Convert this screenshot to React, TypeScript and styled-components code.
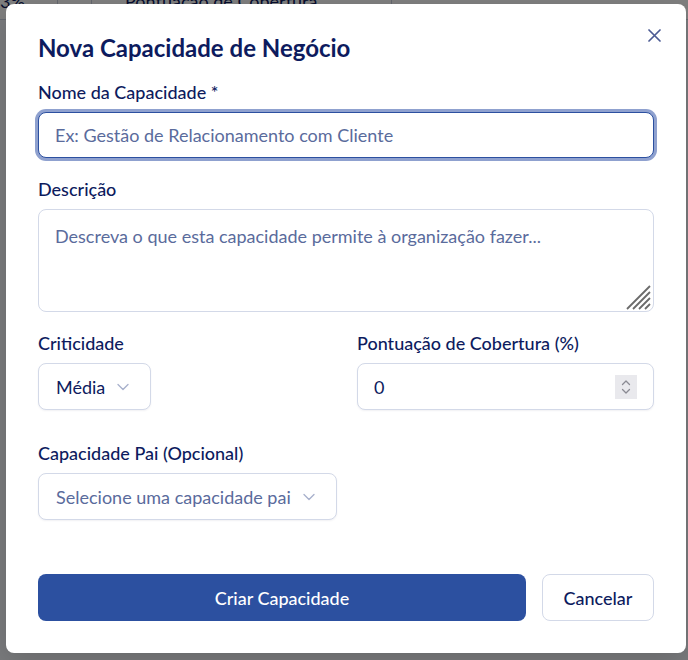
import React from "react";
import styled, { createGlobalStyle } from "styled-components";

const GlobalStyle = createGlobalStyle`
  html, body { margin: 0; padding: 0; }
  body { font-family: Lato, "Noto Sans", sans-serif; background: #f4f6fa; }
  * { box-sizing: border-box; }
`;

const navy = "#0d1b5e";
const muted = "#5a6b9c";
const line = "#d3d9e8";
const brand = "#2c50a0";

const Page = styled.div`
  width: 688px;
  height: 660px;
  overflow: hidden;
  position: relative;
  background: #f4f6fa;
`;

const BgRow = styled.div`
  display: flex;
  margin-top: -14px;
  height: 34px;
  border-bottom: 1px solid #cfd5e3;
  font-size: 18px;
  color: ${navy};
  background: #fff;
`;

const BgCell = styled.div<{ $w: number; $pl: number }>`
  width: ${(p) => p.$w}px;
  flex: none;
  border-right: 1px solid #c9cfdc;
  padding: 4px 0 0 ${(p) => p.$pl}px;
  white-space: nowrap;
  overflow: hidden;
`;

const Overlay = styled.div`
  position: absolute;
  inset: 0;
  background: rgba(0, 0, 0, 0.5);
  padding: 4px 2px 0 6px;
`;

const Dialog = styled.div`
  position: relative;
  width: 680px;
  height: 649px;
  background: #fff;
  border-radius: 8px;
  padding: 32px;
  box-shadow: 0 10px 30px rgba(0, 0, 0, 0.15);
`;

const CloseButton = styled.button`
  position: absolute;
  top: 25px;
  right: 25px;
  width: 13px;
  height: 13px;
  padding: 0;
  border: 0;
  background: none;
  color: #4c5b94;
  display: flex;
`;

const Title = styled.h2`
  margin: 0 0 20px;
  font-size: 24px;
  line-height: 24px;
  font-weight: 700;
  color: ${navy};
`;

const Form = styled.div`
  display: flex;
  flex-direction: column;
  gap: 19px;
`;

const Field = styled.div<{ $mt?: number }>`
  display: flex;
  flex-direction: column;
  gap: 8px;
  margin-top: ${(p) => p.$mt ?? 0}px;
  min-width: 0;
`;

const Label = styled.label`
  font-size: 18px;
  line-height: 24px;
  font-weight: 500;
  color: ${navy};
`;

const TextInput = styled.input`
  height: 46px;
  width: 100%;
  padding: 0 16px;
  border: 1px solid ${brand};
  border-radius: 8px;
  box-shadow: 0 0 0 3px #8fa1cf;
  font-family: inherit;
  font-size: 18px;
  color: ${navy};
  outline: none;
  &::placeholder { color: ${muted}; }
`;

const AreaWrap = styled.div`
  position: relative;
  display: flex;
`;

const TextArea = styled.textarea`
  height: 103px;
  width: 100%;
  padding: 14px 16px;
  border: 1px solid ${line};
  border-radius: 8px;
  resize: none;
  font-family: inherit;
  font-size: 18px;
  line-height: 24px;
  color: ${navy};
  outline: none;
  &::placeholder { color: ${muted}; }
`;

const ResizeGrip = styled.svg`
  position: absolute;
  right: 3px;
  bottom: 2px;
  width: 25px;
  height: 25px;
  color: #6b6b6b;
  pointer-events: none;
`;

const Grid = styled.div`
  display: grid;
  grid-template-columns: 1fr 1fr;
  column-gap: 22px;
`;

const SelectButton = styled.button<{ $placeholder?: boolean }>`
  display: inline-flex;
  align-items: center;
  gap: 8px;
  width: fit-content;
  height: 47px;
  padding: 0 17px 0 17px;
  border: 1px solid ${line};
  border-radius: 8px;
  background: #fff;
  box-shadow: 0 1px 2px rgba(16, 24, 64, 0.06);
  font-family: inherit;
  font-size: 18px;
  color: ${(p) => (p.$placeholder ? muted : navy)};
`;

const Chevron = styled.svg`
  width: 20px;
  height: 20px;
  color: #a8b1cc;
  flex: none;
`;

const NumberWrap = styled.div`
  position: relative;
`;

const NumberInput = styled.input`
  height: 47px;
  width: 100%;
  padding: 0 16px;
  border: 1px solid ${line};
  border-radius: 8px;
  box-shadow: 0 1px 2px rgba(16, 24, 64, 0.06);
  font-family: inherit;
  font-size: 18px;
  color: ${navy};
  outline: none;
  -moz-appearance: textfield;
  &::-webkit-inner-spin-button,
  &::-webkit-outer-spin-button { -webkit-appearance: none; margin: 0; }
`;

const Spinner = styled.div`
  position: absolute;
  right: 17px;
  top: 12px;
  width: 22px;
  height: 24px;
  background: #e9e9ed;
  display: flex;
  align-items: center;
  justify-content: center;
  color: #8a8a92;
`;

const Footer = styled.div`
  display: flex;
  gap: 16px;
  margin-top: 54px;
`;

const PrimaryButton = styled.button`
  flex: 1;
  height: 47px;
  border: 0;
  border-radius: 8px;
  background: ${brand};
  color: #fff;
  font-family: inherit;
  font-size: 18px;
  font-weight: 500;
`;

const SecondaryButton = styled.button`
  width: 112px;
  height: 47px;
  border: 1px solid ${line};
  border-radius: 8px;
  background: #fff;
  color: ${navy};
  font-family: inherit;
  font-size: 18px;
  font-weight: 500;
`;

const ChevronDown = () => (
  <Chevron viewBox="0 0 24 24" fill="none" stroke="currentColor" strokeWidth={1.6} strokeLinecap="round" strokeLinejoin="round">
    <path d="m6 9 6 6 6-6" />
  </Chevron>
);

export default function App() {
  return (
    <Page>
      <GlobalStyle />
      <BgRow>
        <BgCell $w={58} $pl={0}>3%</BgCell>
        <BgCell $w={34} $pl={0}> </BgCell>
        <BgCell $w={300} $pl={33}>Pontuação de Cobertura</BgCell>
      </BgRow>
      <Overlay>
        <Dialog role="dialog">
          <CloseButton aria-label="Fechar">
            <svg width="13" height="13" viewBox="0 0 13 13" fill="none" stroke="currentColor" strokeWidth={1.7} strokeLinecap="round">
              <path d="M1 1 12 12M12 1 1 12" />
            </svg>
          </CloseButton>
          <Title>Nova Capacidade de Negócio</Title>
          <Form>
            <Field>
              <Label>Nome da Capacidade *</Label>
              <TextInput placeholder="Ex: Gestão de Relacionamento com Cliente" />
            </Field>
            <Field>
              <Label>Descrição</Label>
              <AreaWrap>
                <TextArea placeholder="Descreva o que esta capacidade permite à organização fazer..." />
                <ResizeGrip viewBox="0 0 25 25" fill="none" stroke="currentColor" strokeWidth={1.8}>
                  <path d="M1 24 24 1M7 24 24 7M13 24 24 13M19 24 24 19" />
                </ResizeGrip>
              </AreaWrap>
            </Field>
            <Grid>
              <Field>
                <Label>Criticidade</Label>
                <SelectButton>
                  Média
                  <ChevronDown />
                </SelectButton>
              </Field>
              <Field>
                <Label>Pontuação de Cobertura (%)</Label>
                <NumberWrap>
                  <NumberInput type="number" defaultValue={0} />
                  <Spinner>
                    <svg width="12" height="18" viewBox="0 0 12 18" fill="none" stroke="currentColor" strokeWidth={1.3} strokeLinecap="round" strokeLinejoin="round">
                      <path d="M2.5 6.5 6 3l3.5 3.5M2.5 11.5 6 15l3.5-3.5" />
                    </svg>
                  </Spinner>
                </NumberWrap>
              </Field>
            </Grid>
            <Field $mt={12}>
              <Label>Capacidade Pai (Opcional)</Label>
              <SelectButton $placeholder>
                Selecione uma capacidade pai
                <ChevronDown />
              </SelectButton>
            </Field>
          </Form>
          <Footer>
            <PrimaryButton>Criar Capacidade</PrimaryButton>
            <SecondaryButton>Cancelar</SecondaryButton>
          </Footer>
        </Dialog>
      </Overlay>
    </Page>
  );
}
